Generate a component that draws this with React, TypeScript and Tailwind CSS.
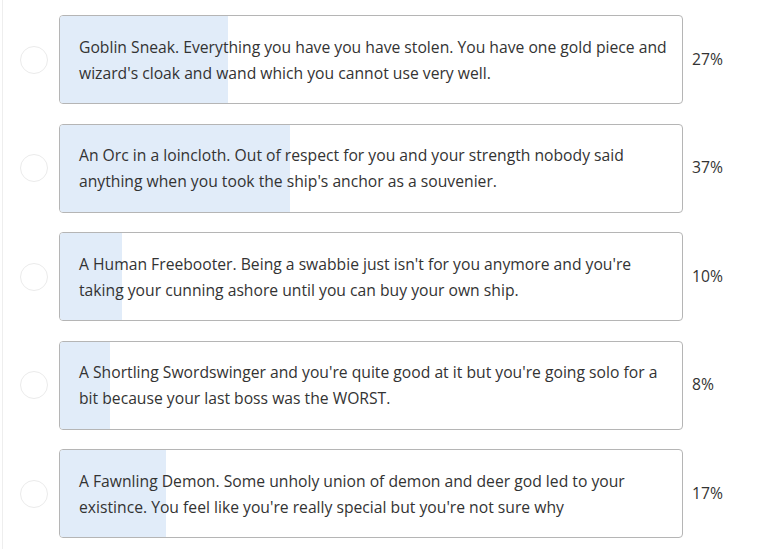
import React from "react";

const options = [
  {
    text: "Goblin Sneak. Everything you have you have stolen. You have one gold piece and wizard's cloak and wand which you cannot use very well.",
    pct: 27,
  },
  {
    text: "An Orc in a loincloth. Out of respect for you and your strength nobody said anything when you took the ship's anchor as a souvenier.",
    pct: 37,
  },
  {
    text: "A Human Freebooter. Being a swabbie just isn't for you anymore and you're taking your cunning ashore until you can buy your own ship.",
    pct: 10,
  },
  {
    text: "A Shortling Swordswinger and you're quite good at it but you're going solo for a bit because your last boss was the WORST.",
    pct: 8,
  },
  {
    text: "A Fawnling Demon. Some unholy union of demon and deer god led to your existince. You feel like you're really special but you're not sure why",
    pct: 17,
  },
];

export default function App() {
  return (
    <div className="w-[768px] h-[549px] bg-white overflow-hidden font-['Open_Sans',sans-serif] text-[#333]">
      <div className="h-full ml-[2px] border-l border-[#eeeeee] pt-[15px] flex flex-col gap-[19.5px]">
        {options.map((o, i) => (
          <div key={i} className="flex items-center">
            <div className="w-[56px] flex justify-center pl-[6px]">
              <div className="w-[28px] h-[28px] rounded-full border border-[#ebebeb] bg-white" />
            </div>
            <div className="relative w-[624px] h-[89px] rounded-[4px] border border-[#b5b5b5] overflow-hidden flex items-center">
              <div
                className="absolute left-0 top-0 bottom-0 bg-[#e1ecf9]"
                style={{ width: `${o.pct}%` }}
              />
              <p className="relative pl-[19px] pr-[8px] text-[15.7px] leading-[26px]">{o.text}</p>
            </div>
            <div className="pl-[9px] text-[15.7px]">{o.pct}%</div>
          </div>
        ))}
      </div>
    </div>
  );
}
